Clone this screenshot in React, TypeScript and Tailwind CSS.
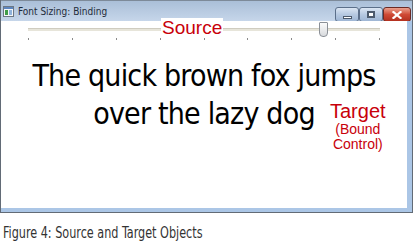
import React from 'react'

const TICKS = [0, 1, 2, 3, 4, 5, 6, 7, 8]

function AppIcon() {
  return (
    <svg width="11" height="11" viewBox="0 0 11 11">
      <rect x="0.5" y="0.5" width="10" height="10" fill="#f4f6f8" stroke="#6b7785" />
      <rect x="1" y="1" width="9" height="2" fill="#5d86c0" />
      <rect x="2" y="4" width="3" height="5" fill="#3f9b48" />
      <rect x="6" y="4" width="3" height="5" fill="#8fb3dc" />
    </svg>
  )
}

function CaptionButton({ kind }: { kind: 'min' | 'max' | 'close' }) {
  if (kind === 'close') {
    return (
      <div className="w-[28px] h-[15px] rounded-[3px] border border-[#6b2a24] bg-gradient-to-b from-[#e9a08e] via-[#cf4a35] to-[#b3301f] flex items-center justify-center">
        <svg width="10" height="8" viewBox="0 0 10 8">
          <path d="M1.5 1 L8.5 7 M8.5 1 L1.5 7" stroke="#fff" strokeWidth="2.2" strokeLinecap="square" />
        </svg>
      </div>
    )
  }
  return (
    <div className="w-[24px] h-[15px] rounded-[3px] border border-[#5b6f8a] bg-gradient-to-b from-[#dbe6f3] via-[#b6c9e1] to-[#9fb6d4] flex items-center justify-center">
      {kind === 'min' ? (
        <div className="w-[9px] h-[3px] mt-[5px] bg-white border border-[#4c5a6c]" />
      ) : (
        <div className="w-[8px] h-[7px] bg-white border-2 border-[#4c5a6c]" />
      )}
    </div>
  )
}

export default function App() {
  return (
    <div className="w-[413px] h-[241px] bg-white overflow-hidden">
      <div className="h-[213px] flex flex-col border-l border-r border-b border-[#626b76]">
        {/* title bar */}
        <div className="h-[21px] shrink-0 flex items-start border-t border-[#7d8a99] bg-gradient-to-b from-[#aabfd8] to-[#c6d6ea]">
          <div className="flex items-center gap-[4px] pl-[2px] pt-[5px]">
            <AppIcon />
            <span className="text-[10px] leading-none text-[#1e2b3a] font-['Segoe_UI','DejaVu_Sans_Condensed','Liberation_Sans',sans-serif]">
              Font Sizing: Binding
            </span>
          </div>
          <div className="ml-auto flex pt-[6px] pr-[1px]">
            <CaptionButton kind="min" />
            <CaptionButton kind="max" />
            <CaptionButton kind="close" />
          </div>
        </div>

        <div className="flex-1 flex">
          {/* client area */}
          <div className="flex-1 bg-white relative">
            {/* slider */}
            <div className="mx-[27px] mt-[6px] relative h-[20px]">
              <div className="absolute left-0 right-0 top-[1px] h-[3px] bg-[#e7e5da] border-t border-[#cfccc0]" />
              <div className="absolute left-[291px] top-[-5px] w-[9px] h-[15px] rounded-b-[4px] rounded-t-[1px] border border-[#8b9097] bg-gradient-to-b from-[#fbfbfb] to-[#d9dbde]" />
              <div className="absolute left-0 right-0 top-[11px] flex justify-between">
                {TICKS.map((t) => (
                  <div key={t} className="w-[1px] h-[2px] bg-[#8a8a8a]" />
                ))}
              </div>
            </div>

            <span className="absolute left-[160px] top-[-3px] px-[1px] bg-white text-[#c8000a] text-[19px] leading-none font-['Liberation_Sans',Arial,sans-serif]">
              Source
            </span>

            {/* bound text */}
            <div className="mt-[10px] text-center text-black text-[30px] tracking-[-0.8px] leading-[38px] font-['Tahoma','DejaVu_Sans_Condensed','DejaVu_Sans',sans-serif]">
              <p>The quick brown fox jumps</p>
              <p>over the lazy dog</p>
            </div>

            <div className="absolute left-[329px] top-[79px] flex flex-col items-center text-[#c8000a] font-['Liberation_Sans',Arial,sans-serif]">
              <span className="text-[20px] leading-[22px]">Target</span>
              <span className="text-[14px] leading-[15px]">(Bound</span>
              <span className="text-[14px] leading-[15px]">Control)</span>
            </div>
          </div>
          <div className="w-[5px] bg-[#abc6e6]" />
        </div>
        <div className="h-[4px] shrink-0 bg-[#abc6e6]" />
      </div>

      <p className="pl-[3px] pt-[7px]">
        <span className="inline-block origin-left scale-x-[0.78] whitespace-nowrap text-[16px] leading-[17px] text-[#333] font-['DejaVu_Sans_Condensed','Liberation_Sans',sans-serif]">
          Figure 4: Source and Target Objects
        </span>
      </p>
    </div>
  )
}
